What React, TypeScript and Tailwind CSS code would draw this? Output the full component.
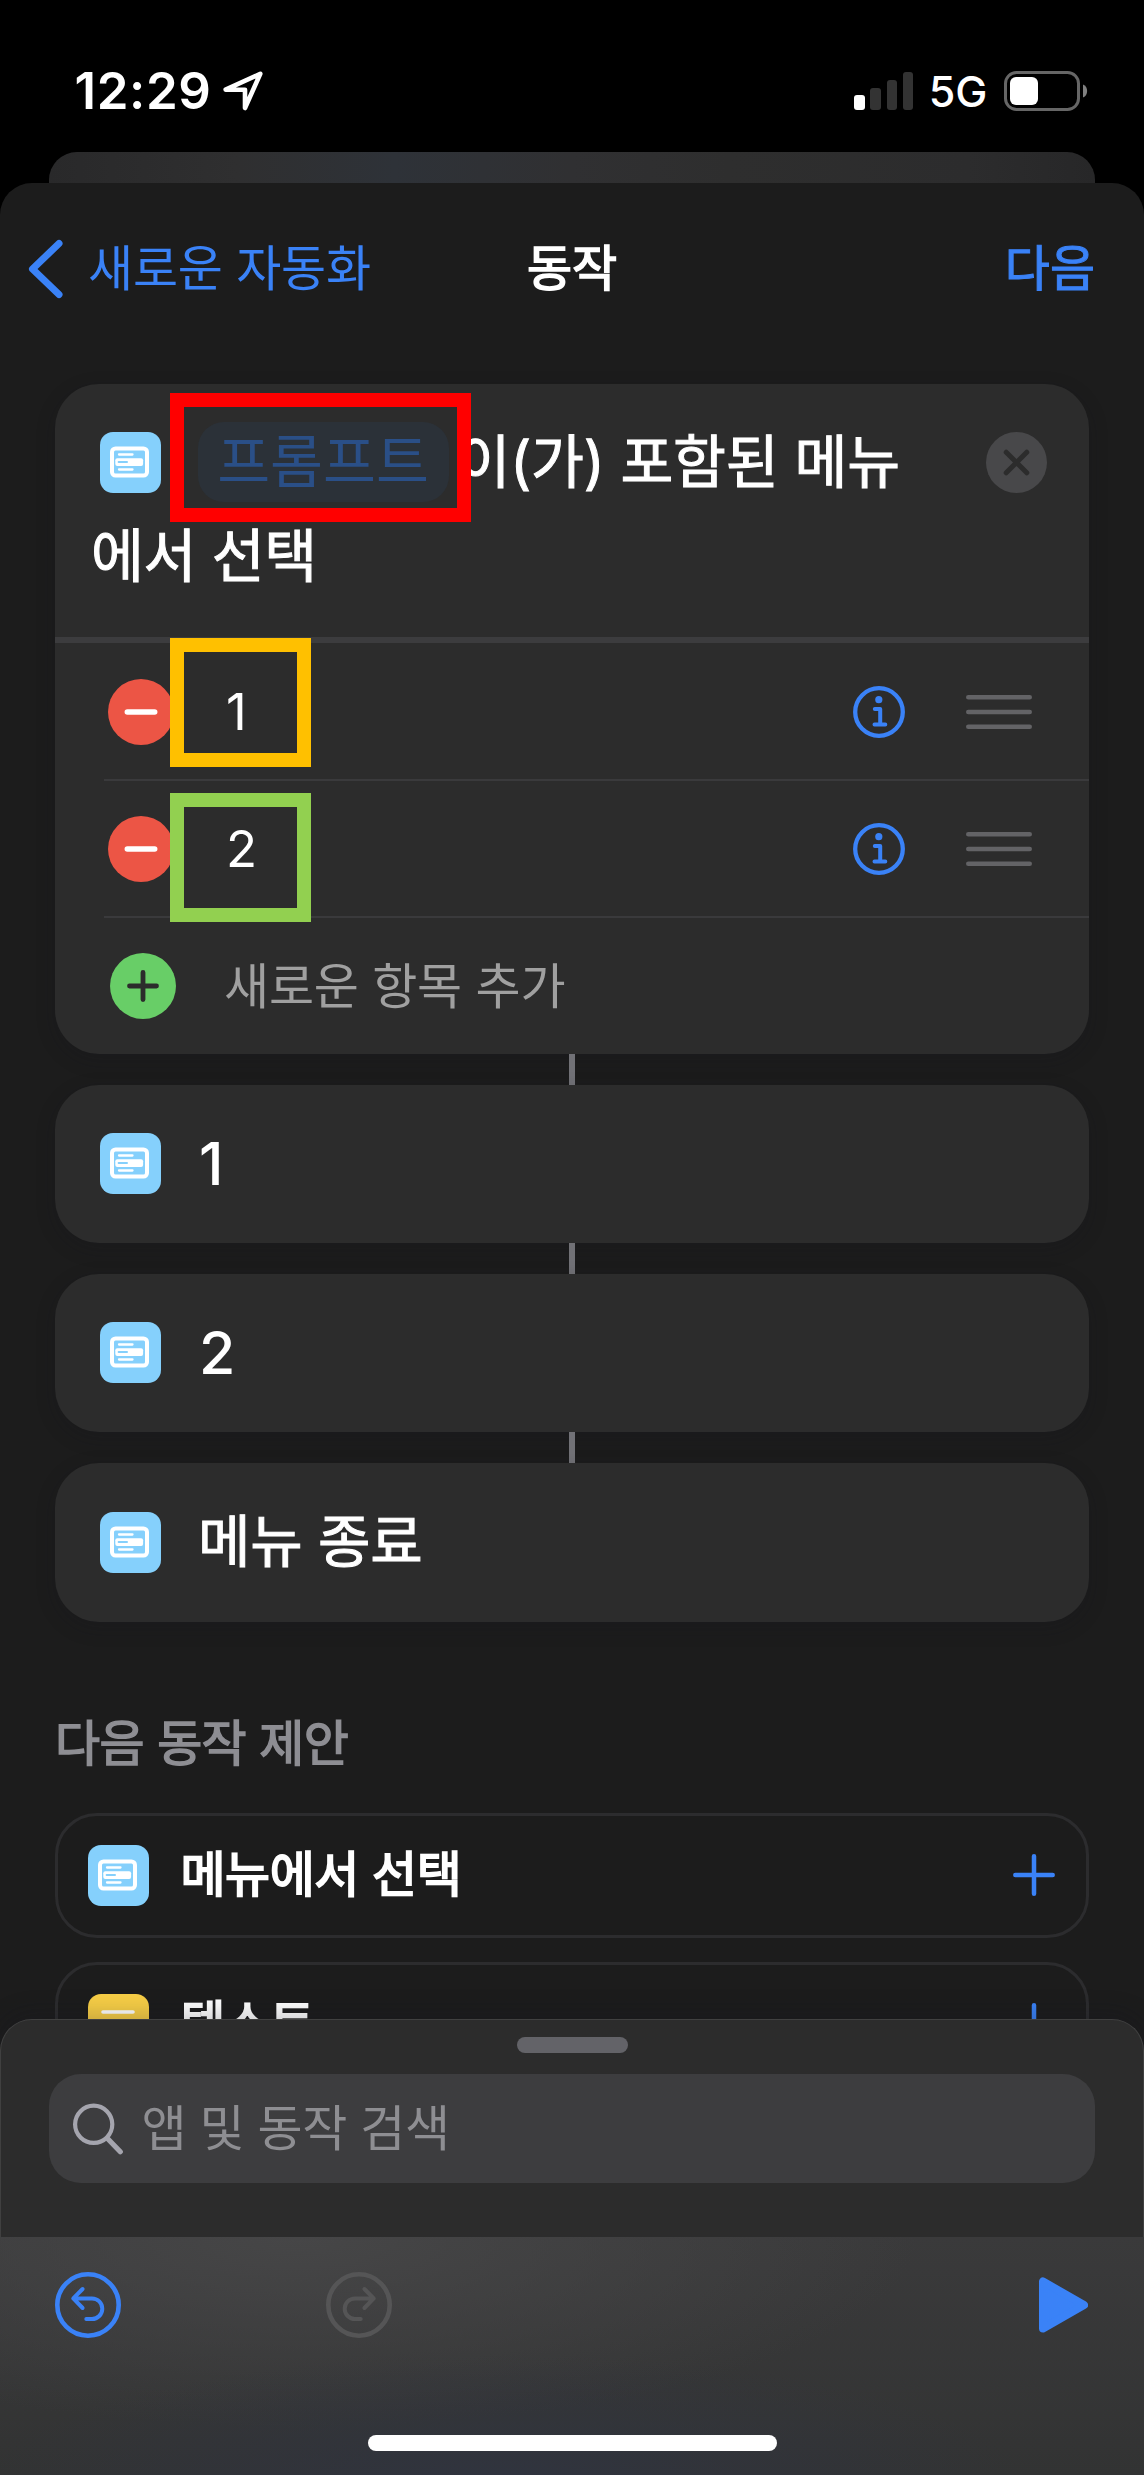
import type { ReactNode } from "react";

const FONT = "font-['Inter','Noto_Sans_CJK_KR',sans-serif]";

function MenuIcon() {
  return (
    <svg className="h-[61px] w-[61px] shrink-0" viewBox="0 0 61 61" fill="none">
      <rect width="61" height="61" rx="13" fill="#85d0fc" />
      <rect x="12" y="16.5" width="35" height="27" rx="3.5" stroke="#fff" strokeWidth="4" />
      <path d="M19 22.5H32.5M19 37.5H32.5" stroke="#fff" strokeWidth="2.3" strokeLinecap="round" />
      <rect x="15.3" y="26.2" width="27.8" height="7.8" rx="2" fill="#fff" />
      <path d="M18.6 30.1H27" stroke="#85d0fc" strokeWidth="2" strokeLinecap="round" />
    </svg>
  );
}

function TextIcon() {
  return (
    <svg className="h-[61px] w-[61px] shrink-0" viewBox="0 0 61 61" fill="none">
      <rect width="61" height="61" rx="13" fill="#f7ce46" />
      <path d="M15 18H45M15 27H35M15 36H45M15 45H35" stroke="#fff" strokeWidth="3.6" strokeLinecap="round" />
    </svg>
  );
}

function StatusBar() {
  return (
    <div className="flex h-[152px] items-center pt-[29px] pl-[74.5px] pr-[56.5px]">
      <span className="text-[51px] leading-[60px] font-semibold tracking-[0.6px] text-white">12:29</span>
      <svg className="ml-[11px] h-[40px] w-[42px]" viewBox="0 0 42 40" fill="none">
        <path
          d="M2.6 18.6 L37.3 2.8 L22 37 V18.8 Z"
          stroke="#fff"
          strokeWidth="4.6"
          strokeLinejoin="round"
        />
      </svg>
      <div className="ml-auto flex h-[38px] items-end gap-[5.9px]">
        <div className="h-[15px] w-[10.4px] rounded-[3px] bg-white" />
        <div className="h-[22px] w-[10.4px] rounded-[3px] bg-[#333333]" />
        <div className="h-[30px] w-[10.4px] rounded-[3px] bg-[#333333]" />
        <div className="h-[38px] w-[10.4px] rounded-[3px] bg-[#333333]" />
      </div>
      <span className="ml-[15.5px] mt-[1px] text-[43px] leading-[50px] font-medium tracking-[-0.3px] text-white">5G</span>
      <svg className="ml-[16.5px] h-[40px] w-[84px]" viewBox="0 0 84 40" fill="none">
        <rect x="1.5" y="1.5" width="73" height="37" rx="11" stroke="#666666" strokeWidth="3" />
        <rect x="6" y="6" width="28" height="28" rx="6" fill="#fff" />
        <path d="M79 13.5C84.5 15.5 84.5 24.5 79 26.5Z" fill="#808080" />
      </svg>
    </div>
  );
}

function Header() {
  return (
    <div className="grid h-[170px] grid-cols-[1fr_auto_1fr] items-center px-[28px] pt-[1px] text-[49px] leading-[60px]">
      <div className="flex items-center text-[#3a82f7]">
        <svg className="h-[60px] w-[36px]" viewBox="0 0 36 60" fill="none">
          <path d="M31 4.5 L4.5 30 L31 55.5" stroke="currentColor" strokeWidth="7" strokeLinecap="round" strokeLinejoin="round" />
        </svg>
        <span className="ml-[24px] tracking-[-0.2px] whitespace-nowrap">새로운 자동화</span>
      </div>
      <span className="text-white [-webkit-text-stroke:1.6px_#fff]">동작</span>
      <span className="mr-[21px] text-right text-[#3a82f7] [-webkit-text-stroke:1px_#3a82f7]">다음</span>
    </div>
  );
}

function ItemRow({ label, height, mark }: { label: string; height: string; mark: ReactNode }) {
  return (
    <div className={`relative flex items-center pl-[53px] pr-[57px] ${height}`}>
      <svg className="h-[66px] w-[66px]" viewBox="0 0 66 66">
        <circle cx="33" cy="33" r="33" fill="#ec5545" />
        <path d="M19.3 33H46.7" stroke="#fff" strokeWidth="5.5" strokeLinecap="round" />
      </svg>
      <span className="ml-[52px] text-[51px] leading-[60px] text-white">{label}</span>
      <svg className="ml-auto h-[52px] w-[52px]" viewBox="0 0 52 52" fill="none" stroke="#3a82f7" strokeLinecap="round" strokeLinejoin="round">
        <circle cx="26" cy="26" r="23.8" strokeWidth="4.3" />
        <circle cx="25.8" cy="13.7" r="3.6" fill="#3a82f7" stroke="none" />
        <path d="M21.8 23H27.2V38.2M21.5 38.4H32.3" strokeWidth="4" />
      </svg>
      <svg className="ml-[61px] h-[34px] w-[66px]" viewBox="0 0 66 34" stroke="#636366" strokeWidth="4.6" strokeLinecap="round">
        <path d="M2.3 2.3H63.7M2.3 17H63.7M2.3 31.7H63.7" />
      </svg>
      <div className="absolute bottom-0 left-[49px] right-0 h-[2px] bg-[#3a3a3c]" />
      {mark}
    </div>
  );
}

function Connector() {
  return <div className="mx-auto h-[31px] w-[6px] bg-[#717176]" />;
}

function ActionCard({ label, numeric, height }: { label: string; numeric?: boolean; height: string }) {
  return (
    <div className={`flex items-center rounded-[44px] bg-[#2c2c2c] pb-[1px] pl-[45px] shadow-[0_6px_20px_rgba(20,20,30,0.2)] ${height}`}>
      <MenuIcon />
      {numeric ? (
        <span className="ml-[38px] text-[59px] leading-[80px] font-medium text-white">{label}</span>
      ) : (
        <span className="ml-[37px] text-[57px] leading-[80px] tracking-[-0.3px] text-white [-webkit-text-stroke:1px_#fff]">{label}</span>
      )}
    </div>
  );
}

function Suggestion({ label, icon }: { label: string; icon: ReactNode }) {
  return (
    <div className="flex h-[125px] items-center rounded-[42px] border-[3px] border-[#2c2c2e] pb-[1px] pl-[29.5px] pr-[31px]">
      {icon}
      <span className="ml-[32px] text-[49px] leading-[60px] tracking-[-0.5px] text-white [-webkit-text-stroke:1.9px_#fff]">{label}</span>
      <svg className="ml-auto h-[42px] w-[42px]" viewBox="0 0 42 42" stroke="#3a82f7" strokeWidth="4.5" strokeLinecap="round">
        <path d="M2.3 21H39.7M21 2.3V39.7" />
      </svg>
    </div>
  );
}

function MenuCard() {
  return (
    <div className="rounded-[44px] bg-[#2c2c2c] shadow-[0_6px_20px_rgba(20,20,30,0.2)]">
      <div className="relative h-[253px] pt-[31px] pl-[36px] text-[57.5px] leading-[94.5px] text-white">
        <div className="flex h-[94.5px] items-center">
          <div className="ml-[9px] flex">
            <MenuIcon />
          </div>
          <span className="ml-[36.5px] flex h-[80px] w-[251px] items-center justify-center rounded-[26px] bg-[#2b3138] text-[#2a4f87]">
            프롬프트
          </span>
          <span className="ml-[9px] whitespace-nowrap tracking-[-0.2px] [-webkit-text-stroke:1px_#fff]">이(가) 포함된 메뉴</span>
          <svg className="ml-auto mr-[42.5px] h-[61px] w-[61px]" viewBox="0 0 61 61">
            <circle cx="30.5" cy="30.5" r="30.5" fill="#48484a" />
            <path d="M20.2 20.2L40.8 40.8M40.8 20.2L20.2 40.8" stroke="#2c2c2c" strokeWidth="5" strokeLinecap="round" />
          </svg>
        </div>
        <p className="-mt-[0.5px] tracking-[-0.4px] [-webkit-text-stroke:1px_#fff]">에서 선택</p>
        <div className="absolute left-[115px] top-[9px] h-[129px] w-[301px] border-[14px] border-[#ff0000]" />
      </div>
      <div className="h-[6px] bg-[#3c3c3e]" />
      <ItemRow
        label="1"
        height="h-[138px]"
        mark={<div className="absolute left-[115px] top-[-5px] z-10 h-[129px] w-[141px] border-[14px] border-[#ffc000]" />}
      />
      <ItemRow
        label="2"
        height="h-[137px] pb-[1px]"
        mark={<div className="absolute left-[115px] top-[12px] z-10 h-[129px] w-[141px] border-[14px] border-[#92d050]" />}
      />
      <div className="flex h-[136px] items-center pl-[55px]">
        <svg className="h-[66px] w-[66px]" viewBox="0 0 66 66">
          <circle cx="33" cy="33" r="33" fill="#68ce67" />
          <path d="M19.5 33H46.5M33 19.5V46.5" stroke="#2c2c2c" strokeWidth="4.8" strokeLinecap="round" />
        </svg>
        <span className="ml-[48px] mt-[1px] text-[49px] leading-[60px] tracking-[-0.2px] text-[#a0a0a0]">새로운 항목 추가</span>
      </div>
    </div>
  );
}

function SearchPanel() {
  return (
    <div className="relative -mt-[40px] h-[218px] rounded-t-[32px] border border-b-0 border-[#404040] bg-[#2c2c2c] px-[48px] pt-[17px] shadow-[0_-4px_24px_rgba(20,20,30,0.25)]">
      <div className="mx-auto h-[16px] w-[111px] rounded-full bg-[#636368]" />
      <div className="mt-[21px] flex h-[109px] items-center rounded-[32px] bg-[#3d3d3f] pl-[24px]">
        <svg className="h-[52px] w-[52px]" viewBox="0 0 52 52" fill="none" stroke="#a5a5ae" strokeLinecap="round">
          <circle cx="20.7" cy="21.3" r="18.6" strokeWidth="4.2" />
          <path d="M34.5 35.5L47.3 48.7" strokeWidth="5.2" />
        </svg>
        <span className="ml-[16.5px] mt-[1px] text-[49px] leading-[60px] tracking-[-0.4px] text-[#8e8e92]">앱 및 동작 검색</span>
      </div>
    </div>
  );
}

function UndoIcon({ className }: { className: string }) {
  return (
    <svg className={`h-[66px] w-[66px] ${className}`} viewBox="0 0 66 66" fill="none" stroke="currentColor" strokeLinecap="round" strokeLinejoin="round">
      <circle cx="33" cy="33" r="30.7" strokeWidth="4.6" />
      <path d="M27.6 17L18.3 26.4L27.6 36M18.3 26.4H37A10.3 10.3 0 0 1 37 47H31.3" strokeWidth="4" />
    </svg>
  );
}

function Toolbar() {
  return (
    <div className="relative flex h-[238px] flex-col bg-[#343536] bg-[radial-gradient(ellipse_520px_130px_at_44%_104%,#30343f_0%,#30343f00_100%),radial-gradient(ellipse_620px_190px_at_26%_0%,#464647_0%,#46464700_100%),linear-gradient(to_bottom,#3a3a3b,#323333)]">
      <div className="flex h-[136px] items-center pl-[55px] pr-[56px]">
        <UndoIcon className="text-[#3a82f7]" />
        <UndoIcon className="ml-[205px] -scale-x-100 text-[#555556]" />
        <svg className="ml-auto h-[56px] w-[49px]" viewBox="0 0 49 56">
          <path d="M4 4.5V51.5L45 28Z" fill="#3a82f7" stroke="#3a82f7" strokeWidth="8" strokeLinejoin="round" />
        </svg>
      </div>
      <div className="mx-auto mt-[62px] h-[16px] w-[409px] rounded-full bg-white" />
    </div>
  );
}

export default function App() {
  return (
    <div className={`h-[2475px] w-[1144px] overflow-hidden bg-black ${FONT}`}>
      <StatusBar />
      <div className="mx-[49px] h-[31px] rounded-t-[28px] bg-[linear-gradient(to_right,#29292a_0%,#2f2f30_18%,#2e3238_33%,#303032_50%,#2e2e2e_65%,#2c2c2d_88%,#272728_100%)]" />
      <div className="h-[1876px] overflow-hidden rounded-t-[32px] bg-[#1c1c1c]">
        <Header />
        <div className="px-[55px] pt-[31px]">
          <MenuCard />
          <Connector />
          <ActionCard label="1" numeric height="h-[158px]" />
          <Connector />
          <ActionCard label="2" numeric height="h-[158px]" />
          <Connector />
          <ActionCard label="메뉴 종료" height="h-[159px]" />
          <h2 className="mt-[92px] mb-[39px] text-[49px] leading-[60px] tracking-[-0.6px] text-[#8e8e93] [-webkit-text-stroke:1.5px_#8e8e93]">
            다음 동작 제안
          </h2>
          <div className="flex flex-col gap-[24px]">
            <Suggestion label="메뉴에서 선택" icon={<MenuIcon />} />
            <Suggestion label="텍스트" icon={<TextIcon />} />
          </div>
        </div>
      </div>
      <SearchPanel />
      <Toolbar />
    </div>
  );
}
